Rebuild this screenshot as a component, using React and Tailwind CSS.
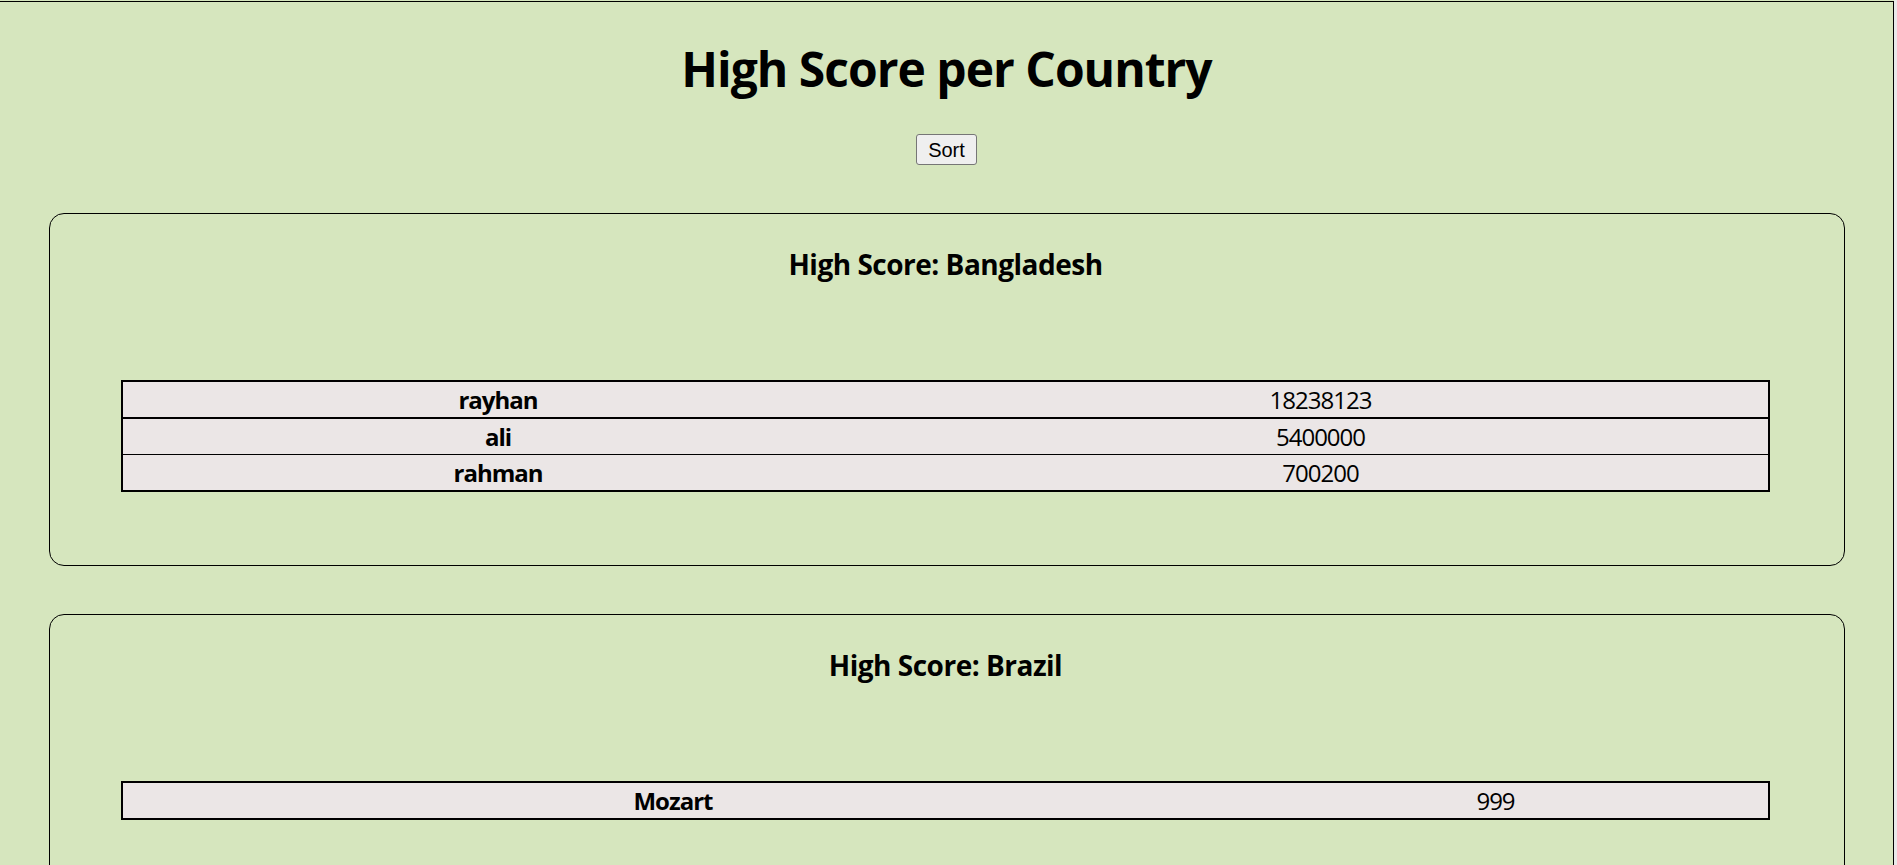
import React from 'react';

const countries = [
  {
    name: 'Bangladesh',
    cols: 'grid-cols-[750px_1fr]',
    scores: [
      { player: 'rayhan', score: 18238123 },
      { player: 'ali', score: 5400000 },
      { player: 'rahman', score: 700200 },
    ],
  },
  {
    name: 'Brazil',
    cols: 'grid-cols-[1100px_1fr]',
    scores: [{ player: 'Mozart', score: 999 }],
  },
];

const rowStyles = ['h-[35px]', 'h-[37px] border-t-2 border-black', 'h-[36px] border-t border-black'];

function ScoreCard({ country }) {
  return (
    <div className="border border-black rounded-[15px] pt-[31px] pb-[73px] pl-[71px] pr-[74px]">
      <h3 className="text-[28px] leading-[38px] font-bold text-center tracking-[-0.5px]">High Score: {country.name}</h3>
      <div className="mt-[97px] border-2 border-black bg-[#ebe6e6] text-[24px] tracking-[-1px]">
        {country.scores.map((row, i) => (
          <div key={row.player} className={`grid ${country.cols} ${rowStyles[i]}`}>
            <div className="flex items-center justify-center font-bold">{row.player}</div>
            <div className="flex items-center justify-center">{row.score}</div>
          </div>
        ))}
      </div>
    </div>
  );
}

export default function App() {
  return (
    <div
      className="h-screen overflow-hidden flex bg-[#d6e6be] text-black"
      style={{ fontFamily: '"Open Sans", sans-serif' }}
    >
      <div className="flex-1 mt-px border-t border-r border-black">
        <h1 className="pt-[35px] text-[48px] leading-[64px] font-bold text-center tracking-[-1px]">High Score per Country</h1>
        <div className="flex justify-center mt-[33px]">
          <button
            className="w-[61px] h-[31px] bg-[#efefef] border border-[#767676] rounded-[3px] text-[20px] leading-none"
            style={{ fontFamily: '"Liberation Sans", Arial, sans-serif' }}
          >
            Sort
          </button>
        </div>
        <div className="mt-[48px] pl-[49px] pr-[48px] flex flex-col gap-[48px]">
          {countries.map((c) => (
            <ScoreCard key={c.name} country={c} />
          ))}
        </div>
      </div>
      <div className="w-[3px] bg-[#e9e9e9]" />
    </div>
  );
}
